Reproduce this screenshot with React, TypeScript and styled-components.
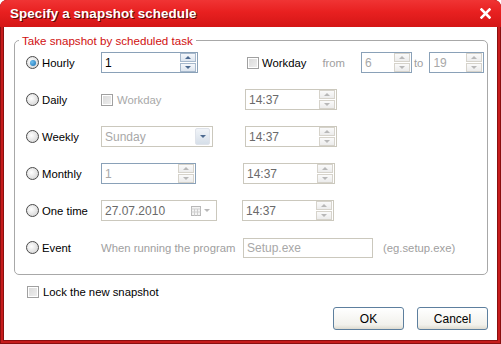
import React from 'react';
import styled, { createGlobalStyle } from 'styled-components';

const GlobalStyle = createGlobalStyle`
  html, body {
    margin: 0;
    padding: 0;
    background: #fff;
  }
  body {
    font-family: "Liberation Sans", Arial, sans-serif;
    font-size: 11.3px;
    color: #000;
  }
`;

const Window = styled.div`
  width: 501px;
  height: 344px;
  box-sizing: border-box;
  display: flex;
  flex-direction: column;
  background: #c61c1c;
  border-radius: 7px 7px 0 0;
  box-shadow: inset 0 0 0 1px #8a0f0f;
  overflow: hidden;
`;

const TitleBar = styled.div`
  height: 27px;
  flex: none;
  display: flex;
  align-items: center;
  justify-content: space-between;
  padding: 0 10px 0 10px;
  background: linear-gradient(#f03434 0%, #e82020 45%, #d41616 100%);
  color: #fff;
  font-size: 13.4px;
  font-weight: bold;
  letter-spacing: 0.1px;
  text-shadow: 1px 1px 0 #5c0a0a;
`;

const CloseButton = styled.svg`
  width: 11px;
  height: 11px;
`;

const Body = styled.div`
  flex: 1;
  margin: 0 3px 3px 3px;
  background: #fff;
  box-shadow: inset 1px 0 0 #8a0f0f, inset -1px 0 0 #8a0f0f, inset 0 -1px 0 #8a0f0f;
  padding: 7px 10px 11px 11px;
  display: flex;
  flex-direction: column;
`;

const GroupBox = styled.fieldset`
  margin: 0;
  padding: 5px 0 14px 11px;
  border: 1px solid #a8a8a8;
  border-radius: 5px;
  display: flex;
  flex-direction: column;
  gap: 16px;
  height: 241px;
  box-sizing: border-box;
`;

const Legend = styled.legend`
  color: #d01010;
  font-size: 11.6px;
  padding: 0 3px;
  margin-left: -7px;
`;

const Row = styled.div`
  display: grid;
  grid-template-columns: 75px 142px 1fr;
  align-items: center;
  height: 21px;
`;

const RadioLabel = styled.label`
  display: flex;
  align-items: center;
  gap: 3px;
`;

const RadioCircle = styled.span<{ $checked?: boolean }>`
  width: 11px;
  height: 11px;
  border-radius: 50%;
  border: 1px solid #4a4a4a;
  background: radial-gradient(circle at 40% 40%, #ffffff 0%, #dcdcdc 70%, #c8c8c8 100%);
  display: flex;
  align-items: center;
  justify-content: center;
  &::after {
    content: '';
    display: ${p => (p.$checked ? 'block' : 'none')};
    width: 6px;
    height: 6px;
    border-radius: 50%;
    background: radial-gradient(circle at 35% 35%, #6fc0f0, #1a6fb0);
  }
`;

const CheckLabel = styled.label<{ $muted?: boolean; $offset?: number; $gap?: number }>`
  display: flex;
  flex: none;
  align-items: center;
  gap: ${p => p.$gap ?? 4}px;
  margin-left: ${p => p.$offset ?? 0}px;
  color: ${p => (p.$muted ? '#a8a8a8' : '#000')};
`;

const CheckSquare = styled.span`
  width: 10px;
  height: 10px;
  border: 1px solid #a0a0a0;
  background: linear-gradient(135deg, #d8d8d8, #f0f0f0);
  box-shadow: inset 0 0 0 1px #fff;
`;

const Muted = styled.span<{ $gap?: number }>`
  flex: none;
  color: #a0a0a0;
  white-space: nowrap;
  margin-left: ${p => p.$gap ?? 0}px;
`;

const Inline = styled.div`
  display: flex;
  align-items: center;
`;

const Field = styled.div<{ $width: number; $tone?: 'blue' | 'gray'; $offset?: number; $height?: number }>`
  flex: none;
  width: ${p => p.$width}px;
  height: ${p => p.$height ?? 21}px;
  box-sizing: border-box;
  border: 1px solid ${p => (p.$tone === 'blue' ? '#8aa1b8' : '#cbc8bd')};
  margin-left: ${p => p.$offset ?? 0}px;
  background: #fff;
  display: flex;
  align-items: center;
  justify-content: space-between;
  padding-left: 3px;
`;

const FieldText = styled.span<{ $tone?: 'dim' | 'dark' | 'black' }>`
  color: ${p => (p.$tone === 'dim' ? '#a8a8a8' : p.$tone === 'black' ? '#000' : '#6a6a6a')};
  font-size: 12px;
`;

const SpinCol = styled.div`
  display: flex;
  flex-direction: column;
  gap: 1px;
  margin-right: 1px;
`;

const SpinButton = styled.div<{ $active?: boolean }>`
  width: 14px;
  height: 7px;
  border: 1px solid ${p => (p.$active ? '#a6b8cc' : '#d6d3cb')};
  background: ${p => (p.$active ? 'linear-gradient(#f4f7fb, #dde5ef)' : 'linear-gradient(#fafafa, #ececec)')};
  display: flex;
  align-items: center;
  justify-content: center;
`;

const Arrow = styled.span<{ $down?: boolean; $active?: boolean }>`
  width: 0;
  height: 0;
  border-left: 3px solid transparent;
  border-right: 3px solid transparent;
  ${p => (p.$down ? 'border-top' : 'border-bottom')}: 3px solid ${p => (p.$active ? '#4d6a90' : '#b8b8b8')};
`;

const DropButton = styled.div`
  width: 13px;
  height: 15px;
  margin-right: 2px;
  border: 1px solid #dfe3ea;
  border-radius: 2px;
  background: linear-gradient(#f1f4f8, #d6dfe9);
  display: flex;
  align-items: center;
  justify-content: center;
`;

const DateTools = styled.div`
  display: flex;
  align-items: center;
  gap: 3px;
  margin-right: 6px;
`;

const Footer = styled.div`
  display: flex;
  flex-direction: column;
  flex: 1;
  padding-left: 13px;
`;

const LockRow = styled.div`
  margin-top: 11px;
`;

const Buttons = styled.div`
  margin-top: auto;
  display: flex;
  justify-content: flex-end;
  gap: 13px;
`;

const Button = styled.button`
  width: 71px;
  height: 23px;
  font-family: inherit;
  font-size: 12px;
  color: #000;
  border: 1px solid #5d7f9e;
  border-radius: 3px;
  background: linear-gradient(#ffffff, #f2f1ec 80%, #dedbd0);
  padding: 0;
`;

const Spin = ({ active }: { active?: boolean }) => (
  <SpinCol>
    <SpinButton $active={active}><Arrow $active={active} /></SpinButton>
    <SpinButton $active={active}><Arrow $down $active={active} /></SpinButton>
  </SpinCol>
);

const Radio = ({ label, checked }: { label: string; checked?: boolean }) => (
  <RadioLabel>
    <RadioCircle $checked={checked} />
    {label}
  </RadioLabel>
);

const TimeBox = ({ offset }: { offset: number }) => (
  <Field $width={92} $offset={offset}>
    <FieldText>14:37</FieldText>
    <Spin />
  </Field>
);

const CalendarIcon = () => (
  <svg width="10" height="10" viewBox="0 0 10 10">
    <rect x="0.5" y="0.5" width="9" height="9" fill="#f4f4f4" stroke="#b8b8b8" />
    <path d="M0.5 3h9M3.5 3v6.5M6.5 3v6.5M0.5 6h9" stroke="#cfcfcf" />
  </svg>
);

export default function App() {
  return (
    <>
      <GlobalStyle />
      <Window>
        <TitleBar>
          <span>Specify a snapshot schedule</span>
          <CloseButton viewBox="0 0 11 11">
            <path d="M1.5 1.5l8 8M9.5 1.5l-8 8" stroke="#fff" strokeWidth="2.6" strokeLinecap="square" />
          </CloseButton>
        </TitleBar>
        <Body>
          <GroupBox>
            <Legend>Take snapshot by scheduled task</Legend>

            <Row>
              <Radio label="Hourly" checked />
              <Field $width={97} $tone="blue">
                <FieldText $tone="black">1</FieldText>
                <Spin active />
              </Field>
              <Inline>
                <CheckLabel $offset={4} $gap={3}>
                  <CheckSquare />
                  Workday
                </CheckLabel>
                <Muted $gap={16}>from</Muted>
                <Field $width={51} $tone="blue" $offset={16}>
                  <FieldText $tone="dim">6</FieldText>
                  <Spin />
                </Field>
                <Muted $gap={2}>to</Muted>
                <Field $width={55} $tone="blue" $offset={6}>
                  <FieldText $tone="dim">19</FieldText>
                  <Spin />
                </Field>
              </Inline>
            </Row>

            <Row>
              <Radio label="Daily" />
              <CheckLabel $muted>
                <CheckSquare />
                Workday
              </CheckLabel>
              <TimeBox offset={2} />
            </Row>

            <Row>
              <Radio label="Weekly" />
              <Field $width={112}>
                <FieldText $tone="dim">Sunday</FieldText>
                <DropButton><Arrow $down $active /></DropButton>
              </Field>
              <TimeBox offset={2} />
            </Row>

            <Row>
              <Radio label="Monthly" />
              <Field $width={95} $tone="blue">
                <FieldText $tone="dim">1</FieldText>
                <Spin />
              </Field>
              <TimeBox offset={0} />
            </Row>

            <Row>
              <Radio label="One time" />
              <Field $width={116}>
                <FieldText>27.07.2010</FieldText>
                <DateTools>
                  <CalendarIcon />
                  <Arrow $down />
                </DateTools>
              </Field>
              <TimeBox offset={-1} />
            </Row>

            <Row>
              <Radio label="Event" />
              <Muted>When running the program</Muted>
              <Inline>
                <Field $width={130} $height={20}>
                  <FieldText $tone="dim">Setup.exe</FieldText>
                </Field>
                <Muted $gap={10}>(eg.setup.exe)</Muted>
              </Inline>
            </Row>
          </GroupBox>

          <Footer>
            <LockRow>
              <CheckLabel>
                <CheckSquare />
                Lock the new snapshot
              </CheckLabel>
            </LockRow>
            <Buttons>
              <Button>OK</Button>
              <Button>Cancel</Button>
            </Buttons>
          </Footer>
        </Body>
      </Window>
    </>
  );
}
